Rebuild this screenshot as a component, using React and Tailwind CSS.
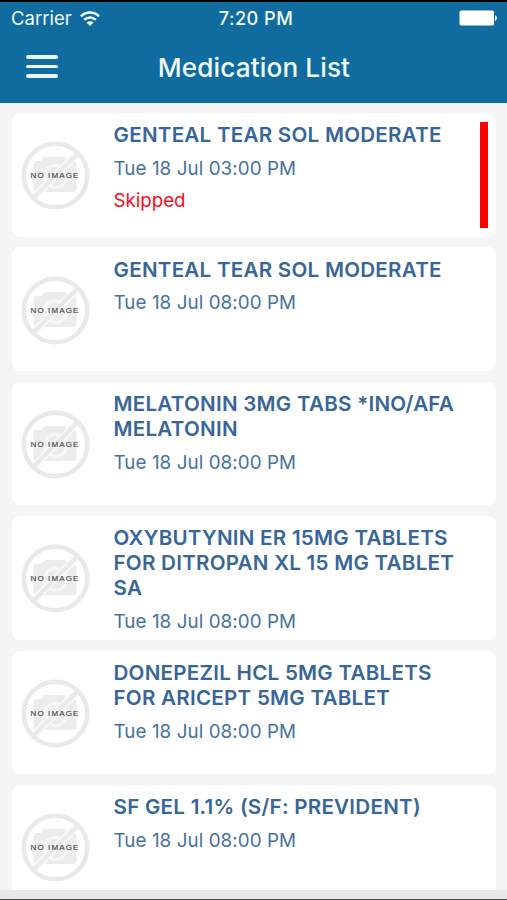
const medications = [
  { id: 1, name: ["GENTEAL TEAR SOL MODERATE"], time: "Tue 18 Jul 03:00 PM", skipped: true },
  { id: 2, name: ["GENTEAL TEAR SOL MODERATE"], time: "Tue 18 Jul 08:00 PM" },
  { id: 3, name: ["MELATONIN 3MG TABS *INO/AFA", "MELATONIN"], time: "Tue 18 Jul 08:00 PM" },
  { id: 4, name: ["OXYBUTYNIN ER 15MG TABLETS", "FOR DITROPAN XL 15 MG TABLET", "SA"], time: "Tue 18 Jul 08:00 PM" },
  { id: 5, name: ["DONEPEZIL HCL 5MG TABLETS", "FOR ARICEPT 5MG TABLET"], time: "Tue 18 Jul 08:00 PM" },
  { id: 6, name: ["SF GEL 1.1% (S/F: PREVIDENT)"], time: "Tue 18 Jul 08:00 PM" },
];

const WifiIcon = () => (
  <svg width="20" height="15" viewBox="0 0 20 15" fill="none" stroke="#f2fbff" strokeWidth="2.5">
    <path d="M1 5.3C6 0.3 14 0.3 19 5.3" />
    <path d="M4.2 8.9C7.4 5.7 12.6 5.7 15.8 8.9" />
    <path d="M10 14.9L6.5 11.5C8.5 9.7 11.5 9.7 13.5 11.5Z" fill="#f2fbff" stroke="none" />
  </svg>
);

const BatteryIcon = () => (
  <svg width="40" height="16" viewBox="0 0 40 16" fill="#ffffff">
    <rect x="0.5" y="0.5" width="34.5" height="15" rx="1.8" />
    <path d="M36 5.2C38.6 5.8 38.6 10.2 36 10.8Z" />
  </svg>
);

const NoImage = () => (
  <div className="relative h-[69px] w-[69px] shrink-0">
    <svg width="69" height="69" viewBox="0 0 69 69" fill="none">
      <path
        d="M15 20H20L24 16H44L48 20H52Q55.5 20 55.5 23.5V47.5Q55.5 51 52 51H16Q12.5 51 12.5 47.5V23.5Q12.5 20 15 20Z"
        fill="#ececec"
      />
      <circle cx="34.5" cy="35.5" r="11" stroke="#f7f7f7" strokeWidth="3" />
      <path d="M12 57L57 12" stroke="#f9f9f9" strokeWidth="7.5" />
      <path d="M12 57L57 12" stroke="#e9e9e9" strokeWidth="4" />
      <circle cx="34.5" cy="34.5" r="31.8" stroke="#e9e9e9" strokeWidth="4.5" />
    </svg>
    <span className="absolute inset-x-0 top-[30px] whitespace-nowrap text-center font-['Liberation_Sans'] text-[8px] leading-[10px] tracking-[1.1px] text-[#444444] [-webkit-text-stroke:0.15px_#444444]">
      NO IMAGE
    </span>
  </div>
);

const MedicationCard = ({ med }) => (
  <div className="flex h-[123.7px] shrink-0 rounded-lg bg-white pl-[9px] pr-[8px]">
    <div className="pt-[28.3px]">
      <NoImage />
    </div>
    <div className="flex-1 pl-[24px] pt-[10.2px]">
      <h2 className="whitespace-nowrap text-[20.6px] font-semibold leading-[24.9px] tracking-[0.25px] text-[#37669a]">
        {med.name.map((line) => (
          <span key={line} className="block">{line}</span>
        ))}
      </h2>
      <p className="mt-[8px] text-[18.8px] leading-[25px] tracking-[0.08px] text-[#4672a1]">{med.time}</p>
      {med.skipped && <p className="mt-[7px] text-[18.8px] leading-[25px] tracking-[-0.05px] text-[#f80d1b]">Skipped</p>}
    </div>
    {med.skipped && <div className="mt-[9px] h-[106px] w-[8px] shrink-0 bg-[#fe0000]" />}
  </div>
);

const App = () => {
  return (
    <div className="flex h-[900px] w-[507px] flex-col overflow-hidden bg-[#f5f5f5] font-['Inter',sans-serif]">
      <header className="h-[102.5px] shrink-0 border-t-2 border-black bg-[#106c9f] text-[#f2fbff]">
        {/* Status bar */}
        <div className="grid h-[32px] grid-cols-[1fr_120px_1fr] items-center pl-[11px] pr-[8px]">
          <div className="flex items-center gap-[8px]">
            <span className="text-[18.5px] leading-6">Carrier</span>
            <WifiIcon />
          </div>
          <span className="whitespace-nowrap pl-[2px] text-center text-[18.2px] font-medium leading-6 tracking-[0.45px]">7:20 PM</span>
          <div className="flex justify-end">
            <BatteryIcon />
          </div>
        </div>

        {/* Title bar */}
        <div className="grid h-[68px] grid-cols-[60px_1fr_60px] items-center">
          <div className="flex flex-col gap-[6px] pb-[3px] pl-[26px]">
            <div className="h-[3.5px] w-[32px] rounded-sm bg-[#e9f7ff]" />
            <div className="h-[3.5px] w-[32px] rounded-sm bg-[#e9f7ff]" />
            <div className="h-[3.5px] w-[32px] rounded-sm bg-[#e9f7ff]" />
          </div>
          <h1 className="pl-px text-center text-[26.2px] font-medium leading-8 tracking-[0.1px]">Medication List</h1>
        </div>
      </header>

      <main className="flex min-h-0 flex-1 flex-col gap-[10.7px] overflow-hidden pl-[11.5px] pr-[11px] pt-[10.5px]">
        {medications.map((med) => (
          <MedicationCard key={med.id} med={med} />
        ))}
      </main>

      <footer className="h-[10px] shrink-0 border-b border-[#454545] bg-[#e8e8e8]" />
    </div>
  );
};

export default App;
